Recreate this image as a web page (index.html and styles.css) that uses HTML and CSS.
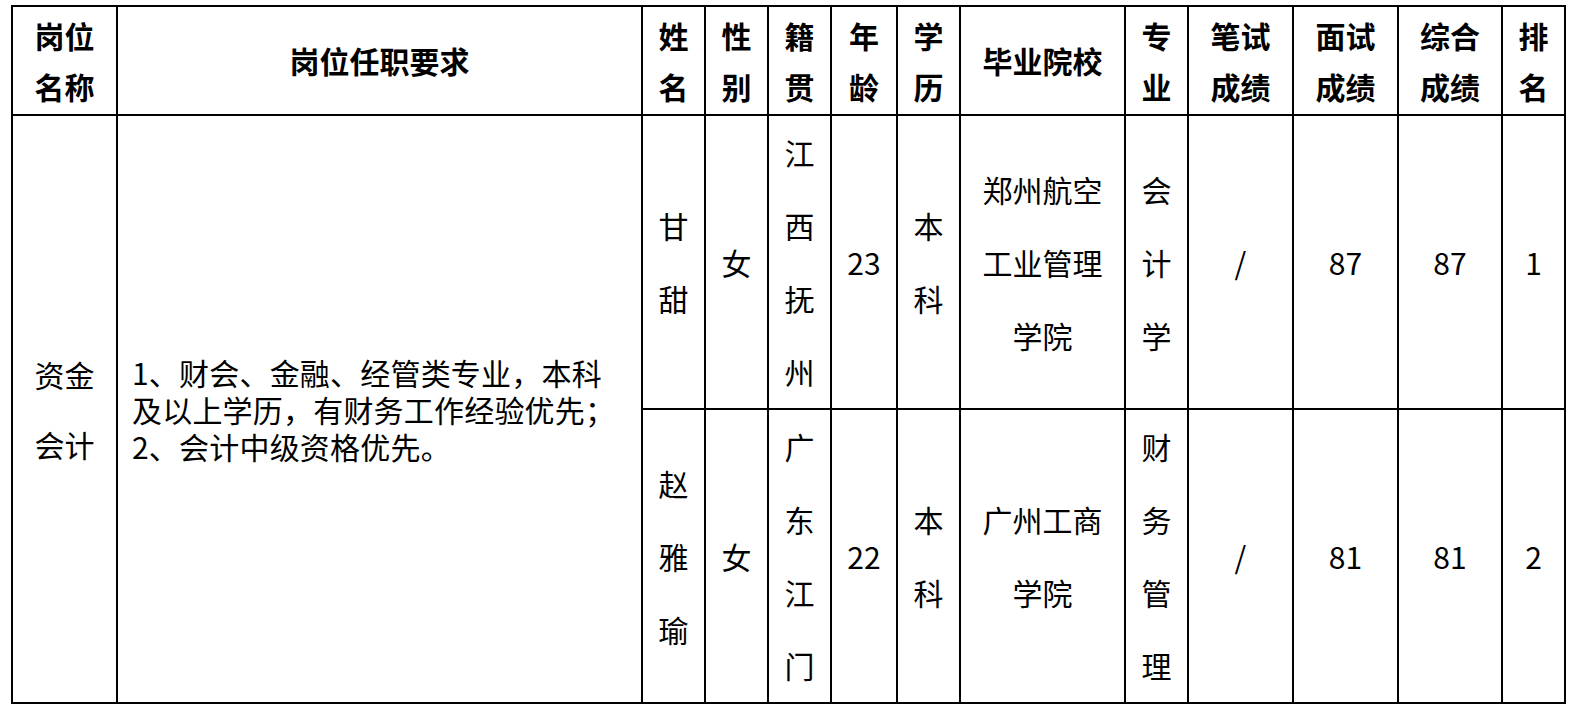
FILE: index.html
```html
<!DOCTYPE html>
<html lang="zh-CN">
<head>
<meta charset="utf-8">
<title>岗位成绩表</title>
<link rel="stylesheet" href="styles.css">
</head>
<body>
<table class="grid">
  <colgroup>
    <col class="c-post">
    <col class="c-req">
    <col class="c-n">
    <col class="c-n">
    <col class="c-n">
    <col class="c-age">
    <col class="c-n">
    <col class="c-school">
    <col class="c-n">
    <col class="c-score">
    <col class="c-score">
    <col class="c-score2">
    <col class="c-n">
  </colgroup>
  <thead>
    <tr class="head-row">
      <th>岗位<br>名称</th>
      <th>岗位任职要求</th>
      <th>姓<br>名</th>
      <th>性<br>别</th>
      <th>籍<br>贯</th>
      <th>年<br>龄</th>
      <th>学<br>历</th>
      <th>毕业院校</th>
      <th>专<br>业</th>
      <th>笔试<br>成绩</th>
      <th>面试<br>成绩</th>
      <th>综合<br>成绩</th>
      <th>排<br>名</th>
    </tr>
  </thead>
  <tbody>
    <tr class="row-1">
      <td rowspan="2" class="post">资金<br>会计</td>
      <td rowspan="2" class="req">1、财会、金融、经管类专业，本科<br>及以上学历，有财务工作经验优先；<br>2、会计中级资格优先。</td>
      <td>甘<br>甜</td>
      <td>女</td>
      <td>江<br>西<br>抚<br>州</td>
      <td>23</td>
      <td>本<br>科</td>
      <td>郑州航空<br>工业管理<br>学院</td>
      <td>会<br>计<br>学</td>
      <td>/</td>
      <td>87</td>
      <td>87</td>
      <td>1</td>
    </tr>
    <tr class="row-2">
      <td>赵<br>雅<br>瑜</td>
      <td>女</td>
      <td>广<br>东<br>江<br>门</td>
      <td>22</td>
      <td>本<br>科</td>
      <td>广州工商<br>学院</td>
      <td>财<br>务<br>管<br>理</td>
      <td>/</td>
      <td>81</td>
      <td>81</td>
      <td>2</td>
    </tr>
  </tbody>
</table>
</body>
</html>
```
FILE: styles.css
```css
html, body {
  margin: 0;
  background: #fff;
}

body {
  padding: 5px 0 0 11px;
  font-family: "Noto Sans CJK SC", "Noto Sans", sans-serif;
  color: #000;
}

.grid {
  border-collapse: collapse;
  table-layout: fixed;
  width: 1555px;
}

.c-post { width: 105px; }
.c-req { width: 525px; }
.c-n { width: 63px; }
.c-age { width: 66px; }
.c-school { width: 165px; }
.c-score { width: 105px; }
.c-score2 { width: 104px; }

.grid th,
.grid td {
  border: 2px solid #000;
  padding: 0;
  text-align: center;
  vertical-align: middle;
}

.grid th {
  font-size: 30px;
  font-weight: 700;
  line-height: 51px;
}

.grid td {
  font-size: 30px;
  font-weight: 400;
  line-height: 73px;
}

.head-row { height: 109px; }
.row-1 { height: 293px; }
.row-2 { height: 292px; }

.grid td.post {
  line-height: 70px;
}

.grid td.req {
  text-align: left;
  line-height: 37px;
  padding-left: 14px;
  letter-spacing: 0.2px;
}
```
